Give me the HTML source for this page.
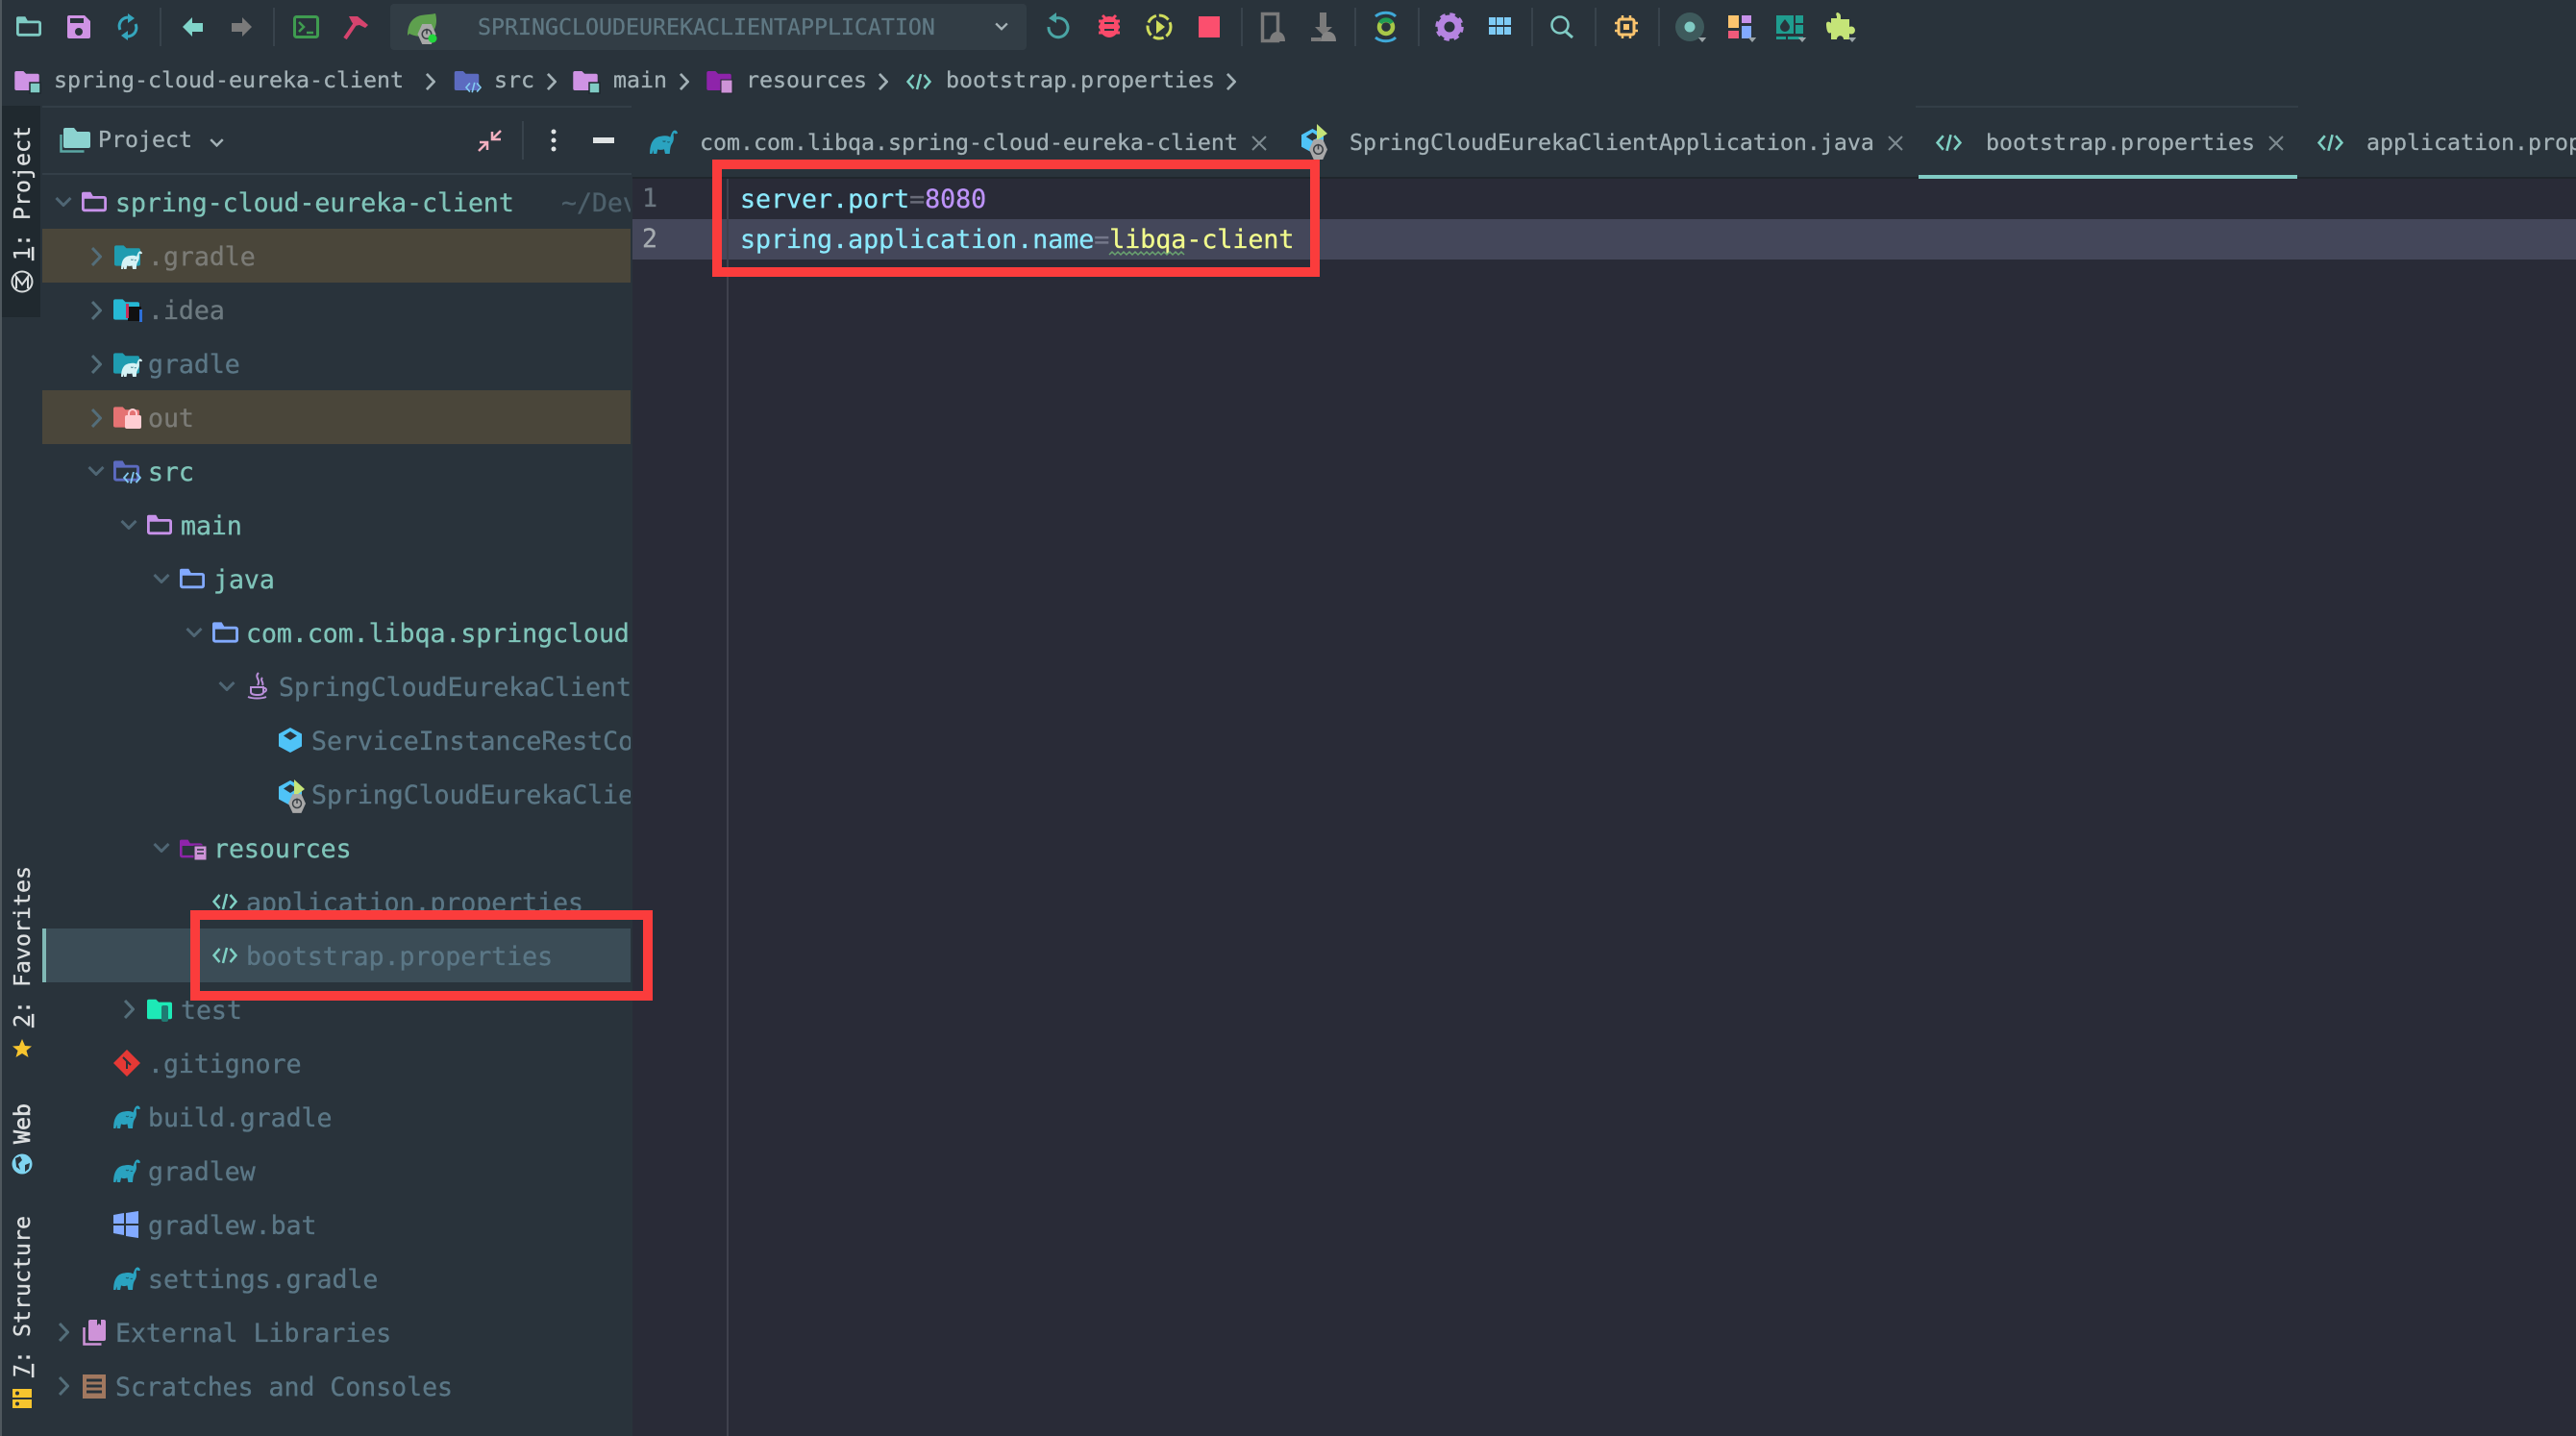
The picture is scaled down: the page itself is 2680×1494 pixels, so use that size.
<!DOCTYPE html>
<html><head><meta charset="utf-8"><title>bootstrap.properties</title>
<style>
html,body{margin:0;padding:0;width:2680px;height:1494px;overflow:hidden;background:#29333b}
*{box-sizing:border-box}
.a{position:absolute}
.t{position:absolute;white-space:pre;font-family:"DejaVu Sans Mono","Liberation Mono",monospace;line-height:1;-webkit-text-stroke:.3px currentColor}
.s{font-size:23.25px;color:#a3b1b6}
.r{position:absolute;white-space:pre;font-family:"DejaVu Sans Mono","Liberation Mono",monospace;font-size:26.5px;height:56px;line-height:59px;overflow:hidden;right:auto;-webkit-text-stroke:.35px currentColor}
.b{color:#7fc4b9}.d{color:#5b7786}.g{color:#7b7b76}.i{color:#6d7a80}
svg{position:absolute;left:0;top:0}
</style></head>
<body>
<!-- surfaces -->
<div class="a" style="left:0;top:0;width:2px;height:1494px;background:#4f585e"></div>
<div class="a" style="left:2px;top:110px;width:40px;height:220px;background:#20292f"></div>
<div class="a" style="left:658px;top:186px;width:2022px;height:1308px;background:#292b37"></div>
<div class="a" style="left:658px;top:228px;width:2022px;height:42px;background:#44475a"></div>
<div class="a" style="left:756px;top:186px;width:2px;height:1308px;background:#3f414d"></div>
<div class="a" style="left:658px;top:184px;width:2022px;height:2px;background:#20262c"></div>
<div class="a" style="left:44px;top:110px;width:613px;height:2px;background:#333e47"></div>
<div class="a" style="left:44px;top:180px;width:613px;height:2px;background:#343f48"></div>
<div class="a" style="left:44px;top:238px;width:612px;height:56px;background:#4a463a"></div>
<div class="a" style="left:44px;top:406px;width:612px;height:56px;background:#4a463a"></div>
<div class="a" style="left:44px;top:966px;width:612px;height:56px;background:#3b4c56"></div>
<div class="a" style="left:44px;top:966px;width:4px;height:56px;background:#80b8b5"></div>
<div class="a" style="left:1993px;top:110px;width:398px;height:2px;background:#333e47"></div>
<div class="a" style="left:1996px;top:182px;width:394px;height:4px;background:#80cbc4"></div>
<div class="a" style="left:406px;top:4px;width:662px;height:48px;border-radius:4px;background:#323d45"></div>

<!-- toolbar + breadcrumb text -->
<div class="t s" style="left:497px;top:17px;color:#5f7883">SPRINGCLOUDEUREKACLIENTAPPLICATION</div>
<div class="t s" style="left:56px;top:72px">spring-cloud-eureka-client</div>
<div class="t s" style="left:514px;top:72px">src</div>
<div class="t s" style="left:638px;top:72px">main</div>
<div class="t s" style="left:776px;top:72px">resources</div>
<div class="t s" style="left:984px;top:72px">bootstrap.properties</div>
<div class="t s" style="left:102px;top:134px">Project</div>

<!-- tabs -->
<div class="t s" style="left:728px;top:137px">com.com.libqa.spring-cloud-eureka-client</div>
<div class="t s" style="left:1404px;top:137px">SpringCloudEurekaClientApplication.java</div>
<div class="t s" style="left:2066px;top:137px">bootstrap.properties</div>
<div class="t s" style="left:2462px;top:137px">application.properties</div>

<!-- tree -->
<div class="r b" style="left:120px;top:182px;width:460px">spring-cloud-eureka-client</div>
<div class="r" style="left:584px;top:182px;width:72px;color:#4d606b">~/Dev</div>
<div class="r g" style="left:154px;top:238px;width:400px">.gradle</div>
<div class="r i" style="left:154px;top:294px;width:400px">.idea</div>
<div class="r d" style="left:154px;top:350px;width:400px">gradle</div>
<div class="r g" style="left:154px;top:406px;width:400px">out</div>
<div class="r b" style="left:154px;top:462px;width:400px">src</div>
<div class="r b" style="left:188px;top:518px;width:400px">main</div>
<div class="r b" style="left:222px;top:574px;width:400px">java</div>
<div class="r b" style="left:256px;top:630px;width:400px">com.com.libqa.springcloud</div>
<div class="r d" style="left:290px;top:686px;width:366px">SpringCloudEurekaClientApplication</div>
<div class="r d" style="left:324px;top:742px;width:332px">ServiceInstanceRestController</div>
<div class="r d" style="left:324px;top:798px;width:332px">SpringCloudEurekaClientApplication</div>
<div class="r b" style="left:222px;top:854px;width:400px">resources</div>
<div class="r d" style="left:256px;top:910px;width:400px">application.properties</div>
<div class="r d" style="left:256px;top:966px;width:400px">bootstrap.properties</div>
<div class="r d" style="left:188px;top:1022px;width:400px">test</div>
<div class="r d" style="left:154px;top:1078px;width:400px">.gitignore</div>
<div class="r d" style="left:154px;top:1134px;width:400px">build.gradle</div>
<div class="r d" style="left:154px;top:1190px;width:400px">gradlew</div>
<div class="r d" style="left:154px;top:1246px;width:400px">gradlew.bat</div>
<div class="r d" style="left:154px;top:1302px;width:400px">settings.gradle</div>
<div class="r d" style="left:120px;top:1358px;width:500px">External Libraries</div>
<div class="r d" style="left:120px;top:1414px;width:500px">Scratches and Consoles</div>

<!-- editor -->
<div class="t" style="left:668px;top:194px;font-size:26.5px;color:#6b7680">1</div>
<div class="t" style="left:668px;top:236px;font-size:26.5px;color:#a5abb0">2</div>
<div class="t" style="left:770px;top:195px;font-size:26.6px;color:#8be9fd">server.port<span style="color:#686b78">=</span><span style="color:#bd93f9">8080</span></div>
<div class="t" style="left:770px;top:237px;font-size:26.6px;color:#8be9fd">spring.application.name<span style="color:#74778a">=</span><span style="color:#f1fa8c">libqa-client</span></div>

<svg width="2680" height="1494" viewBox="0 0 2680 1494" xmlns="http://www.w3.org/2000/svg">
<defs>
<symbol id="ff" viewBox="0 0 28 22"><path fill="currentColor" d="M0 2a2 2 0 0 1 2-2h8l3 3h13a2 2 0 0 1 2 2v15a2 2 0 0 1-2 2H2a2 2 0 0 1-2-2z"/></symbol>
<symbol id="fo" viewBox="0 0 28 22"><path fill="none" stroke="currentColor" stroke-width="3" d="M1.500 6v13a1.500 1.500 0 0 0 1.500 1.500h22a1.500 1.500 0 0 0 1.500-1.500V7.500a1.500 1.500 0 0 0-1.500-1.500z"/><path fill="currentColor" d="M0 6V2a2 2 0 0 1 2-2h8l3.500 6z"/></symbol>
<symbol id="el" viewBox="0 0 30 26"><path fill="currentColor" d="M0 26C0 16 3 8 12 7c3-.5 7-1 10 1 1-2 1.500-5 3-6.500C27-.5 30 1 30 4l-2.500.5c-.5-1.500-2-1-2 1 .5 3.500.5 6.500-1.500 9.500-2 3-2 6-2.500 11h-5l-1-5c-2.500 1-5 1-7 0l-1 5H4l-.5-4-1 4z"/><path fill="none" stroke="#1d5f70" stroke-width="1.200" d="M14 12c1 1 2 1 3 0M19 13c.8.8 1.600.8 2.400 0"/></symbol>
<symbol id="cd" viewBox="0 0 26 18"><g fill="none" stroke="currentColor" stroke-width="2.500"><path d="M7.500 2 1.500 9l6 7M11 17 15 1M18.500 2l6 7-6 7"/></g></symbol>
<symbol id="dn" viewBox="0 0 18 10"><path fill="none" stroke="currentColor" stroke-width="3" d="M1.500 1 9 8.500 16.500 1"/></symbol>
<symbol id="rt" viewBox="0 0 11 20"><path fill="none" stroke="currentColor" stroke-width="3" d="M1 1l8.500 9L1 19"/></symbol>
<symbol id="hex" viewBox="0 0 24 26"><path fill="#4fc3f7" d="M12 0l12 6.500v13L12 26 0 19.500v-13z"/><path fill="#29333b" d="M12 4l7 4.500-7 4.500-7-4.500z"/></symbol>
<symbol id="pw" viewBox="0 0 20 22"><path fill="#a8a8a8" d="M5 0h10l5 11-5 11H5L0 11z"/><circle cx="10" cy="11" r="5" fill="none" stroke="#3a3f44" stroke-width="1.600"/><path stroke="#3a3f44" stroke-width="1.600" d="M10 5v6"/></symbol>
<symbol id="tri" viewBox="0 0 10 6"><path fill="#9aa4a8" d="M0 0h10L5 6z"/></symbol>
</defs>

<!-- toolbar icons -->
<use href="#fo" x="17" y="17" width="26" height="21" color="#7fcbc4"/>
<path fill="#cf93e4" d="M72 16h16l6 6v16a2 2 0 0 1-2 2H72a2 2 0 0 1-2-2V18a2 2 0 0 1 2-2z"/><rect x="73" y="19" width="14" height="5" fill="#29333b"/><circle cx="82" cy="33" r="4" fill="#29333b"/>
<g fill="none" stroke="#35a6bd" stroke-width="3"><path d="M125 31a9 9 0 0 1 12-12M141 25a9 9 0 0 1-12 12"/></g><path fill="#35a6bd" d="M133 14l7 5-7 5zM133 42l-7-5 7-5z"/>
<rect x="166" y="8" width="2" height="40" fill="#38434c"/><rect x="284" y="8" width="2" height="40" fill="#38434c"/>
<path fill="#80d4ca" d="M190 28l10-10v6h11v9h-11v5z"/><path fill="#7a7a7a" d="M262 28l-10-10v6h-11v9h11v5z"/>
<rect x="306.500" y="17.500" width="24" height="21" rx="2" fill="none" stroke="#3f9c50" stroke-width="3"/><path fill="none" stroke="#3f9c50" stroke-width="2.500" d="M311 23l5 5-5 5M319 34h7"/>
<path fill="none" stroke="#d6446e" stroke-width="4" d="M359 40l13-19"/><path fill="#d6446e" d="M363 17h9l11 9-3 3-6-3-5 1-3-4z"/>
<path fill="#5ea04e" d="M453 14c3 11-1 20-7 22-6 3-15 2-20-1l-2 2c0-12 5-19 14-21 6-1 11-1 15-2z"/><use href="#pw" x="434" y="25" width="20" height="21"/><circle cx="450" cy="40" r="4.500" fill="#22d63c"/>
<use href="#dn" x="1035" y="23" width="14" height="9" color="#a8b4b8"/>
<path fill="none" stroke="#4aa5a5" stroke-width="3" d="M1096 20a10 10 0 1 1-5 8"/><path fill="#4aa5a5" d="M1099 13v11l-8-5z"/>
<ellipse cx="1154" cy="28" rx="10" ry="11" fill="#fa4a6a"/><path stroke="#fa4a6a" stroke-width="3" d="M1143 22h22M1143 28h22M1143 34h22M1147 16l4 4M1161 16l-4 4"/><path stroke="#29333b" stroke-width="2" d="M1149 24h10M1149 31h10"/>
<circle cx="1206" cy="28" r="12" fill="none" stroke="#cfdc5c" stroke-width="3" stroke-dasharray="11 3"/><path fill="#cfdc5c" d="M1203 21l9 7-9 7z"/>
<rect x="1247" y="17" width="22" height="22" fill="#fb4f6e"/>
<rect x="1291" y="8" width="2" height="40" fill="#38434c"/><rect x="1409" y="8" width="2" height="40" fill="#38434c"/><rect x="1475" y="8" width="2" height="40" fill="#38434c"/>
<rect x="1313.500" y="14.500" width="16" height="28" fill="none" stroke="#7a7a7a" stroke-width="3.500"/><path fill="#7d7d7d" d="M1321 43c0-6 3-10 8-10s8 4 8 10z"/>
<path fill="#7a7a7a" d="M1373 13h7v15h6l-9 9-9-9h5zM1364 39h10v4h-10z"/><path fill="#858585" d="M1374 43c0-6 3-10 8-10s8 4 8 10z"/>
<circle cx="1442" cy="28" r="7" fill="none" stroke="#a8c848" stroke-width="4.500"/><path fill="none" stroke="#1f9d55" stroke-width="4.500" d="M1436 24a7 7 0 0 1 12 0"/><path fill="none" stroke="#3fa9d8" stroke-width="3" d="M1431 17c6-5 16-5 21 0M1431 39c6 5 16 5 21 0"/>
<circle cx="1508" cy="28" r="9" fill="none" stroke="#b584e0" stroke-width="7"/><circle cx="1508" cy="28" r="13" fill="none" stroke="#b584e0" stroke-width="3.500" stroke-dasharray="5.500 4.700"/>
<g fill="#7ecbf5"><rect x="1549" y="18" width="7" height="8"/><rect x="1557" y="18" width="7" height="8"/><rect x="1565" y="18" width="7" height="8"/><rect x="1549" y="28" width="7" height="8"/><rect x="1557" y="28" width="7" height="8"/><rect x="1565" y="28" width="7" height="8"/></g>
<rect x="1593" y="8" width="2" height="40" fill="#38434c"/><rect x="1659" y="8" width="2" height="40" fill="#38434c"/><rect x="1725" y="8" width="2" height="40" fill="#38434c"/>
<circle cx="1623" cy="26" r="8.500" fill="none" stroke="#80cbc4" stroke-width="2.500"/><path stroke="#80cbc4" stroke-width="3" d="M1629 33l7 6"/>
<rect x="1684" y="20" width="16" height="16" rx="2" fill="none" stroke="#fbc46e" stroke-width="3"/><rect x="1689" y="25" width="6" height="6" fill="#fbc46e"/><path stroke="#fbc46e" stroke-width="2.500" d="M1680 24h4M1680 32h4M1700 24h4M1700 32h4M1688 16v4M1696 16v4M1688 36v4M1696 36v4"/>
<circle cx="1758" cy="28" r="15" fill="#3e5a5c"/><circle cx="1758" cy="28" r="5.500" fill="#80cbc4"/><use href="#tri" x="1766" y="39" width="10" height="5"/>
<rect x="1798" y="16" width="11" height="13" fill="#fbc46e"/><rect x="1812" y="16" width="10" height="8" fill="#c792ea"/><rect x="1798" y="32" width="11" height="8" fill="#ef5a7a"/><rect x="1812" y="27" width="10" height="13" fill="#82aaff"/><use href="#tri" x="1818" y="39" width="10" height="5"/>
<rect x="1848" y="16" width="18" height="19" fill="#1f9d8f"/><rect x="1868" y="16" width="8" height="8" fill="#1f9d8f"/><rect x="1868" y="26" width="8" height="9" fill="#1f9d8f"/><path fill="#29333b" d="M1857 20c3 4 5 6 5 8a5 5 0 0 1-10 0c0-2 2-4 5-8z"/><rect x="1848" y="38" width="10" height="3" fill="#1f9d8f"/><rect x="1860" y="38" width="16" height="3" fill="#1f9d8f"/><use href="#tri" x="1870" y="39" width="10" height="5"/>
<path fill="#c5e478" d="M1911 13a4 4 0 0 1 4 4v3h9v8a4 4 0 1 1 0 7v6h-6c0-5-7-5-7 0h-6v-7c-5 3-5-9-5-9 0-3 3-3 5-1v-5h6v-2a3 3 0 0 1 0-4z"/><use href="#tri" x="1922" y="39" width="10" height="5"/>

<!-- breadcrumb icons -->
<use href="#ff" x="15" y="74" width="26" height="20" color="#cf93e4"/><rect x="31" y="86" width="11" height="11" fill="#80cbc4" stroke="#1e262c" stroke-width="1.500"/>
<use href="#rt" x="443" y="76" width="10" height="18" color="#a3b1b6"/>
<use href="#ff" x="472" y="74" width="27" height="20" color="#5c6bc0"/><use href="#cd" x="484" y="84" width="17" height="14" color="#82c8f0"/>
<use href="#rt" x="569" y="76" width="10" height="18" color="#a3b1b6"/>
<use href="#ff" x="596" y="74" width="26" height="20" color="#cf93e4"/><rect x="613" y="86" width="11" height="11" fill="#80cbc4" stroke="#1e262c" stroke-width="1.500"/>
<use href="#rt" x="707" y="76" width="10" height="18" color="#a3b1b6"/>
<use href="#ff" x="735" y="74" width="26" height="20" color="#8e24aa"/><rect x="750" y="83" width="12" height="14" fill="#ce93d8" stroke="#1e262c"/>
<use href="#rt" x="914" y="76" width="10" height="18" color="#a3b1b6"/>
<use href="#cd" x="943" y="76" width="26" height="18" color="#7fd0c4"/>
<use href="#rt" x="1276" y="76" width="10" height="18" color="#a3b1b6"/>

<!-- panel header -->
<rect x="66" y="137" width="28" height="17" rx="2" fill="#8cd3d0"/><path fill="#8cd3d0" d="M66 138v-3a2 2 0 0 1 2-2h9l4 5z"/><path fill="none" stroke="#5aa8a4" stroke-width="2.500" d="M63.500 140v17.500h24"/>
<use href="#dn" x="218" y="144" width="15" height="9" color="#a3b1b6"/>
<path fill="none" stroke="#f4b0c0" stroke-width="2.500" d="M521 136l-9 9M512 137v8h9M498 157l9-9M507 156v-8h-8"/>
<rect x="543" y="126" width="2" height="40" fill="#38434c"/>
<g fill="#dfe3e4"><circle cx="576" cy="137" r="2.500"/><circle cx="576" cy="146" r="2.500"/><circle cx="576" cy="155" r="2.500"/></g>
<rect x="617" y="143" width="22" height="6" fill="#dfe3e4"/>

<!-- tab icons -->
<use href="#el" x="676" y="135" width="29" height="25" color="#2aa3c0"/>
<use href="#hex" x="1354" y="134" width="23" height="25"/><path fill="#c5e478" d="M1370 129l11 10-11 7z"/><use href="#pw" x="1362" y="145" width="19" height="21"/>
<use href="#cd" x="2014" y="139" width="27" height="19" color="#7fd0c4"/>
<use href="#cd" x="2411" y="139" width="27" height="19" color="#7fd0c4"/>
<g stroke="#7e8b91" stroke-width="2" fill="none"><path d="M1303 142l14 14M1317 142l-14 14M1965 142l14 14M1979 142l-14 14M2361 142l14 14M2375 142l-14 14"/></g>

<!-- tree chevrons -->
<g>
<use href="#dn" x="57" y="205" width="18" height="10" color="#4f6674"/>
<use href="#rt" x="95" y="257" width="11" height="20" color="#546e7a"/>
<use href="#rt" x="95" y="313" width="11" height="20" color="#546e7a"/>
<use href="#rt" x="95" y="369" width="11" height="20" color="#546e7a"/>
<use href="#rt" x="95" y="425" width="11" height="20" color="#546e7a"/>
<use href="#dn" x="91" y="485" width="18" height="10" color="#4f6674"/>
<use href="#dn" x="125" y="541" width="18" height="10" color="#4f6674"/>
<use href="#dn" x="159" y="597" width="18" height="10" color="#4f6674"/>
<use href="#dn" x="193" y="653" width="18" height="10" color="#4f6674"/>
<use href="#dn" x="227" y="709" width="18" height="10" color="#4f6674"/>
<use href="#dn" x="159" y="877" width="18" height="10" color="#4f6674"/>
<use href="#rt" x="129" y="1040" width="11" height="20" color="#546e7a"/>
<use href="#rt" x="61" y="1376" width="11" height="20" color="#546e7a"/>
<use href="#rt" x="61" y="1432" width="11" height="20" color="#546e7a"/>
</g>

<!-- tree icons -->
<use href="#fo" x="85" y="199" width="26" height="22" color="#c792ea"/>
<use href="#ff" x="119" y="255" width="27" height="22" color="#1f9cb0"/><use href="#el" x="126" y="261" width="22" height="19" color="#d5f2f5"/>
<use href="#ff" x="118" y="311" width="27" height="22" color="#26b8d4"/><rect x="133" y="319" width="14" height="15" fill="#111"/><rect x="131" y="316" width="3" height="15" fill="#c7305a"/><rect x="145" y="322" width="3" height="13" fill="#2d6fd8"/>
<use href="#ff" x="118" y="367" width="27" height="22" color="#1f9cb0"/><use href="#el" x="126" y="373" width="22" height="19" color="#d5f2f5"/>
<use href="#ff" x="118" y="423" width="27" height="22" color="#e57373"/><rect x="130" y="432" width="17" height="14" rx="2" fill="#ffcdd2"/><path fill="none" stroke="#ffcdd2" stroke-width="2" d="M134 433v-3a4 4 0 0 1 8 0v3"/>
<use href="#fo" x="118" y="479" width="27" height="22" color="#5c6bc0"/><use href="#cd" x="128" y="490" width="19" height="14" color="#82c8f0"/>
<use href="#fo" x="153" y="535" width="26" height="22" color="#c792ea"/>
<use href="#fo" x="187" y="591" width="26" height="22" color="#82aaff"/>
<use href="#fo" x="221" y="647" width="27" height="22" color="#82aaff"/>
<g fill="none" stroke="#b98fd9" stroke-width="2"><path d="M269 700c-5 5 3 7-1 13M273 705c-3 3 2 5 0 8"/><path d="M261 715h13v5c0 2-2 3-6 3s-7-1-7-3zM274 716c4-1 4 4 0 4M258 725c5 2 14 2 19 0"/></g>
<use href="#hex" x="290" y="757" width="24" height="26"/>
<use href="#hex" x="290" y="812" width="24" height="26"/><path fill="#c5e478" d="M306 811l11 10-11 8z"/><use href="#pw" x="300" y="826" width="18" height="20"/>
<use href="#fo" x="187" y="872" width="24" height="22" color="#8e24aa"/><rect x="202" y="880" width="13" height="15" fill="#ce93d8" stroke="#29333b"/><path stroke="#29333b" stroke-width="1.500" d="M205 884h7M205 888h7"/>
<use href="#cd" x="221" y="929" width="26" height="18" color="#7fd0c4"/>
<use href="#cd" x="221" y="985" width="26" height="18" color="#7fd0c4"/>
<use href="#ff" x="153" y="1039" width="26" height="22" color="#1de9b6"/><rect x="168" y="1046" width="7" height="17" rx="2" fill="#1f7a72"/>
<path fill="#e53935" d="M132 1092l14 14-14 14-14-14z"/><path stroke="#29333b" stroke-width="2" d="M128 1100l8 8M132 1104v8"/>
<use href="#el" x="118" y="1150" width="28" height="24" color="#2aa3c0"/>
<use href="#el" x="118" y="1206" width="28" height="24" color="#2aa3c0"/>
<path fill="#82aaff" d="M118 1264l11-2v11h-11zM131 1262l13-2v13h-13zM118 1275h11v10l-11-2zM131 1275h13v13l-13-2z"/>
<use href="#el" x="118" y="1318" width="28" height="24" color="#2aa3c0"/>
<rect x="92" y="1373" width="18" height="22" rx="2" fill="#ce93d8"/><path fill="none" stroke="#ce93d8" stroke-width="2.500" d="M87.500 1381v17.500h18"/><path fill="#29333b" d="M101 1373v6l2-2 2 2v-6z"/>
<rect x="86" y="1430" width="24" height="25" fill="#a1785f"/><path stroke="#29333b" stroke-width="3" d="M90 1436h16M90 1442h16M90 1448h16"/>

<!-- tool window strip -->
<g font-family="'DejaVu Sans Mono','Liberation Mono',monospace" font-size="23.250" fill="#dcdfe0" stroke="#dcdfe0" stroke-width=".3">
<text transform="translate(31 271) rotate(-90)"><tspan text-decoration="underline">1</tspan>: Project</text>
<text transform="translate(31 1069) rotate(-90)"><tspan text-decoration="underline">2</tspan>: Favorites</text>
<text transform="translate(31 1190) rotate(-90)" stroke-width=".6">Web</text>
<text transform="translate(31 1433) rotate(-90)"><tspan text-decoration="underline">7</tspan>: Structure</text>
</g>
<circle cx="23" cy="293" r="10.500" fill="none" stroke="#d8dcdd" stroke-width="2"/><path fill="none" stroke="#d8dcdd" stroke-width="2" d="M17 300v-12l6 8 6-8v12"/>
<path fill="#f7c52e" d="M23 1081l3 7 7 .5-5.500 4.500 2 7-6.500-4-6.500 4 2-7-5.500-4.500 7-.5z"/>
<circle cx="23" cy="1211" r="10.500" fill="#7fd4f0"/><path fill="#29333b" d="M16 1205l5-2 2 4-4 4 2 6-4-3zM26 1212l5-2-1 6-4 3z"/>
<rect x="13" y="1445" width="20" height="9" fill="#f7c52e"/><rect x="13" y="1456" width="20" height="9" fill="#f7c52e"/><circle cx="18" cy="1449.500" r="2" fill="#29333b"/><circle cx="18" cy="1460.500" r="2" fill="#29333b"/>

<!-- wavy underline -->
<path fill="none" stroke="#6aa36f" stroke-width="1.500" d="M1154 265l3-3 3 3 3-3 3 3 3-3 3 3 3-3 3 3 3-3 3 3 3-3 3 3 3-3 3 3 3-3 3 3 3-3 3 3 3-3 3 3 3-3 3 3 3-3 3 3 3-3 3 3"/>
</svg>

<!-- red annotation boxes -->
<div class="a" style="left:741px;top:166px;width:632px;height:122px;border:10px solid #fb3c3c"></div>
<div class="a" style="left:198px;top:947px;width:481px;height:94px;border:10px solid #fb3c3c"></div>
</body></html>
